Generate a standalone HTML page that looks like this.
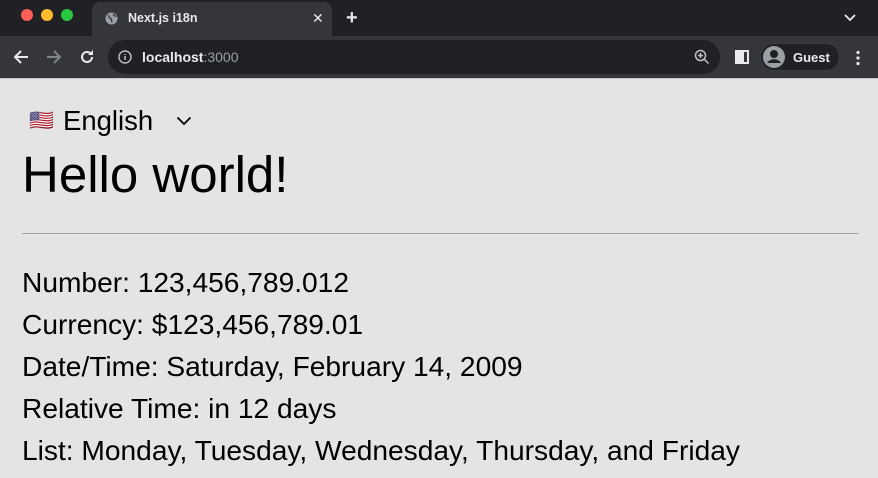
<!DOCTYPE html>
<html><head><meta charset="utf-8"><style>
*{margin:0;padding:0;box-sizing:border-box}
body{width:878px;height:478px;overflow:hidden;background:#e4e4e4;font-family:"Liberation Sans",Arial,sans-serif;position:relative}
.top{position:absolute;left:0;top:0;width:878px;height:36px;background:#202124}
.dot{position:absolute;top:9px;width:12px;height:12px;border-radius:50%}
.tab{position:absolute;left:92px;top:2px;width:240px;height:34px;background:#35363a;border-radius:8px 8px 0 0}
.bar{position:absolute;left:0;top:36px;width:878px;height:42px;background:#35363a}
.omni{position:absolute;left:108px;top:40px;width:612px;height:34px;border-radius:17px;background:#202124}
.t{position:absolute;color:#e8eaed;font-size:13px;white-space:nowrap}
.c{position:absolute;left:22px;color:#000;white-space:nowrap}
.l{font-size:28.15px;line-height:42px}
</style></head><body>
<div class="top"></div>
<div class="dot" style="left:21px;background:#ff5f57"></div>
<div class="dot" style="left:41px;background:#febc2e"></div>
<div class="dot" style="left:61px;background:#28c840"></div>
<div class="tab"></div>
<svg style="position:absolute;left:105px;top:12px" width="13" height="13" viewBox="0 0 14 14"><circle cx="7" cy="7" r="6.5" fill="#9aa0a6"/><path d="M3 3.5c2 1 1 3 3 3.5s0 3 2 4M9 2c0 2 2 2 3 3" stroke="#35363a" stroke-width="1.5" fill="none"/></svg>
<div class="t" style="left:128px;top:11px;font-weight:bold;font-size:12.5px">Next.js i18n</div>
<div class="t" style="left:312px;top:10px;font-size:14px">✕</div>
<div class="t" style="left:346px;top:7px;font-size:20px;font-weight:bold">+</div>
<svg style="position:absolute;left:844px;top:14px" width="12" height="8"><path d="M1 1l5 5 5-5" stroke="#e8eaed" stroke-width="1.8" fill="none"/></svg>
<div class="bar"></div>
<svg style="position:absolute;left:13px;top:49px" width="16" height="16"><path d="M15 8H2M8 2L2 8l6 6" stroke="#e8eaed" stroke-width="2" fill="none"/></svg>
<svg style="position:absolute;left:46px;top:49px" width="16" height="16"><path d="M1 8h13M8 2l6 6-6 6" stroke="#80868b" stroke-width="2" fill="none"/></svg>
<svg style="position:absolute;left:79px;top:49px" width="16" height="16"><path d="M13 8a5 5 0 1 1-1.5-3.6" stroke="#e8eaed" stroke-width="2" fill="none"/><path d="M14 1v5h-5z" fill="#e8eaed"/></svg>
<div class="omni"></div>
<svg style="position:absolute;left:118px;top:50px" width="14" height="14"><circle cx="7" cy="7" r="6" stroke="#bdc1c6" stroke-width="1.4" fill="none"/><path d="M7 6v4M7 4v1" stroke="#bdc1c6" stroke-width="1.5"/></svg>
<div class="t" style="left:142px;top:49px;font-size:14px"><b>localhost</b><span style="color:#9aa0a6">:3000</span></div>
<svg style="position:absolute;left:694px;top:49px" width="16" height="16"><circle cx="6.5" cy="6.5" r="5" stroke="#bdc1c6" stroke-width="1.5" fill="none"/><path d="M10 10l4.5 4.5M6.5 4v5M4 6.5h5" stroke="#bdc1c6" stroke-width="1.5"/></svg>
<svg style="position:absolute;left:735px;top:50px" width="14" height="14"><rect x="1" y="1" width="12" height="12" stroke="#e8eaed" stroke-width="2" fill="none"/><rect x="1" y="1" width="8" height="12" fill="#e8eaed"/></svg>
<div style="position:absolute;left:760px;top:43px;width:80px;height:28px;border-radius:14px;background:#202124;border:1px solid #3c3d41"></div>
<svg style="position:absolute;left:762px;top:45px" width="24" height="24"><circle cx="12" cy="12" r="11" fill="#9aa0a6"/><circle cx="12" cy="9" r="4" fill="#202124"/><path d="M5 18c3-5 11-5 14 0" fill="#202124"/></svg>
<div class="t" style="left:793px;top:50px;font-weight:bold;font-size:13px">Guest</div>
<svg style="position:absolute;left:855px;top:50px" width="6" height="16"><circle cx="3" cy="2.5" r="1.6" fill="#e8eaed"/><circle cx="3" cy="8" r="1.6" fill="#e8eaed"/><circle cx="3" cy="13.5" r="1.6" fill="#e8eaed"/></svg>
<div style="position:absolute;left:0;top:78px;width:878px;height:1px;background:#c8c8c8"></div>

<div class="c" style="left:29px;top:106px;font-size:20px;line-height:30px">🇺🇸</div>
<div class="c" style="left:63px;top:104px;font-size:27.5px;line-height:34px">English</div>
<svg style="position:absolute;left:176px;top:116px" width="16" height="10"><path d="M1.5 1.5l6.5 6.5 6.5-6.5" stroke="#000" stroke-width="1.8" fill="none"/></svg>
<div class="c" style="top:146px;font-size:51px;line-height:58px">Hello world!</div>
<div style="position:absolute;left:22px;top:233px;width:837px;height:1px;background:#a3a3a3"></div>
<div class="c l" style="top:262px">Number: 123,456,789.012</div>
<div class="c l" style="top:304px">Currency: $123,456,789.01</div>
<div class="c l" style="top:346px">Date/Time: Saturday, February 14, 2009</div>
<div class="c l" style="top:388px">Relative Time: in 12 days</div>
<div class="c l" style="top:430px">List: Monday, Tuesday, Wednesday, Thursday, and Friday</div>
</body></html>
